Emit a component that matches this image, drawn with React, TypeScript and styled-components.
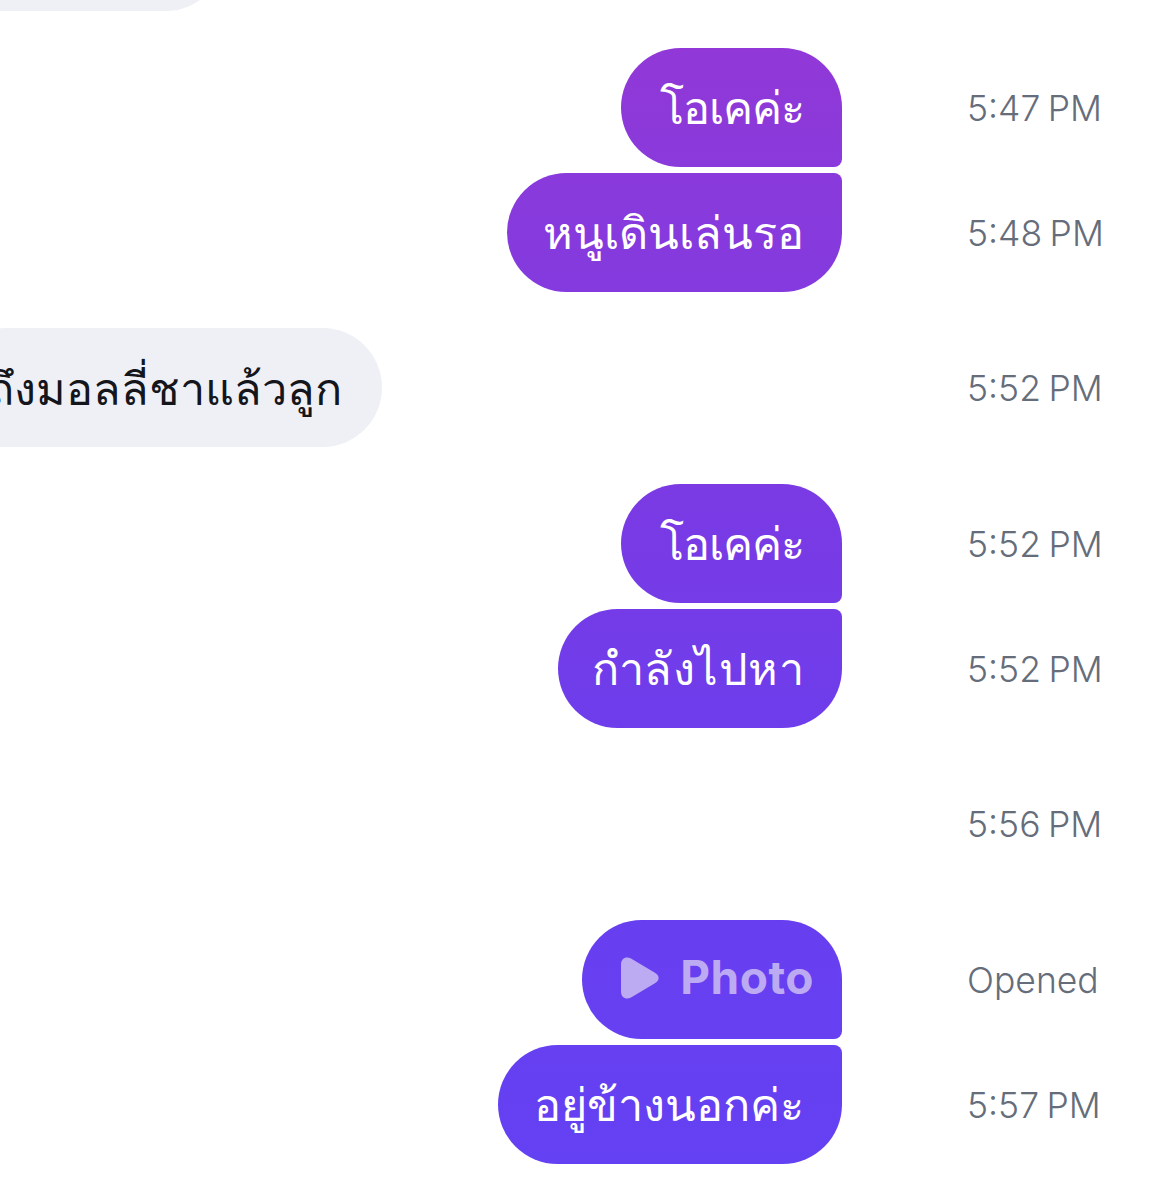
import React from 'react';
import styled, { createGlobalStyle } from 'styled-components';

const GlobalStyle = createGlobalStyle`
  html, body {
    margin: 0;
    padding: 0;
    background: #ffffff;
  }
`;

const Page = styled.div`
  width: 1173px;
  height: 1200px;
  overflow: hidden;
  display: flex;
  flex-direction: column;
  font-family: Inter, "Noto Sans", "Liberation Sans", "DejaVu Sans", sans-serif;
`;

const Group = styled.div<{ $first?: boolean }>`
  display: flex;
  flex-direction: column;
  gap: 6px;
  margin-top: ${(p) => (p.$first ? '-108px' : '36.5px')};
`;

const Row = styled.div`
  display: grid;
  grid-template-columns: 842px 1fr;
  column-gap: 125px;
  height: 119px;
  align-items: center;
`;

const Side = styled.div<{ $width?: number }>`
  height: 100%;
  display: flex;
  justify-content: flex-end;
  width: ${(p) => p.$width ?? 842}px;
`;

const Bubble = styled.div<{ $pos: 'top' | 'bottom'; $width: number; $tracking?: number }>`
  flex: none;
  width: ${(p) => p.$width}px;
  height: 100%;
  box-sizing: border-box;
  display: flex;
  align-items: center;
  justify-content: flex-end;
  padding: 2px 38px 0 0;
  font-size: 45px;
  font-weight: 500;
  letter-spacing: ${(p) => p.$tracking ?? 0}px;
  white-space: nowrap;
  color: #ffffff;
  border-radius: ${(p) => (p.$pos === 'top' ? '60px 60px 8px 60px' : '60px 8px 60px 60px')};
  background: linear-gradient(180deg, #9437d6 0px, #883adc 200px, #7a3ae4 500px, #6a3eee 800px, #6341f3 1200px) fixed;
`;

const Incoming = styled.div`
  flex: none;
  height: 100%;
  box-sizing: border-box;
  display: flex;
  align-items: center;
  padding: 2px 40px 0;
  font-size: 45px;
  font-weight: 500;
  white-space: nowrap;
  color: #14161c;
  border-radius: 60px;
  background: #eff0f5;
`;

const CutOff = styled(Incoming)`
  width: 400px;
`;

const PhotoBubble = styled(Bubble)`
  padding: 0 28px 0 0;
`;

const PhotoLabel = styled.span`
  display: flex;
  align-items: center;
  gap: 21px;
  font-size: 46px;
  font-weight: 700;
  letter-spacing: 0.5px;
  color: #bcaaf2;
  padding-bottom: 5px;
`;

const PlayGlyph = styled.svg`
  margin-top: 3px;
`;

const Time = styled.div`
  padding-top: 2px;
  font-size: 35.5px;
  font-weight: 350;
  word-spacing: -2.5px;
  color: #666d7a;
  white-space: nowrap;
`;

const PlayIcon = () => (
  <PlayGlyph width="38" height="42" viewBox="0 0 38 42" fill="currentColor">
    <path d="M0 7.500C0 1.500 5 -1.200 10 1.500L33.500 15.500C39 18.700 39 23.300 33.500 26.500L10 40.500C5 43.200 0 40.500 0 34.500Z" />
  </PlayGlyph>
);

const App: React.FC = () => (
  <Page>
    <GlobalStyle />
    <Group $first>
      <Row>
        <Side $width={225}>
          <CutOff />
        </Side>
      </Row>
    </Group>
    <Group>
      <Row>
        <Side>
          <Bubble $pos="top" $width={221} $tracking={-1}>โอเคค่ะ</Bubble>
        </Side>
        <Time>5:47 PM</Time>
      </Row>
      <Row>
        <Side>
          <Bubble $pos="bottom" $width={335}>หนูเดินเล่นรอ</Bubble>
        </Side>
        <Time>5:48 PM</Time>
      </Row>
    </Group>
    <Group>
      <Row>
        <Side $width={382}>
          <Incoming>ถึงมอลลี่ชาแล้วลูก</Incoming>
        </Side>
        <Time>5:52 PM</Time>
      </Row>
    </Group>
    <Group>
      <Row>
        <Side>
          <Bubble $pos="top" $width={221} $tracking={-1}>โอเคค่ะ</Bubble>
        </Side>
        <Time>5:52 PM</Time>
      </Row>
      <Row>
        <Side>
          <Bubble $pos="bottom" $width={284} $tracking={0.5}>กำลังไปหา</Bubble>
        </Side>
        <Time>5:52 PM</Time>
      </Row>
    </Group>
    <Group>
      <Row>
        <Side />
        <Time>5:56 PM</Time>
      </Row>
    </Group>
    <Group>
      <Row>
        <Side>
          <PhotoBubble $pos="top" $width={260}>
            <PhotoLabel>
              <PlayIcon />
              Photo
            </PhotoLabel>
          </PhotoBubble>
        </Side>
        <Time>Opened</Time>
      </Row>
      <Row>
        <Side>
          <Bubble $pos="bottom" $width={344}>อยู่ข้างนอกค่ะ</Bubble>
        </Side>
        <Time>5:57 PM</Time>
      </Row>
    </Group>
  </Page>
);

export default App;
